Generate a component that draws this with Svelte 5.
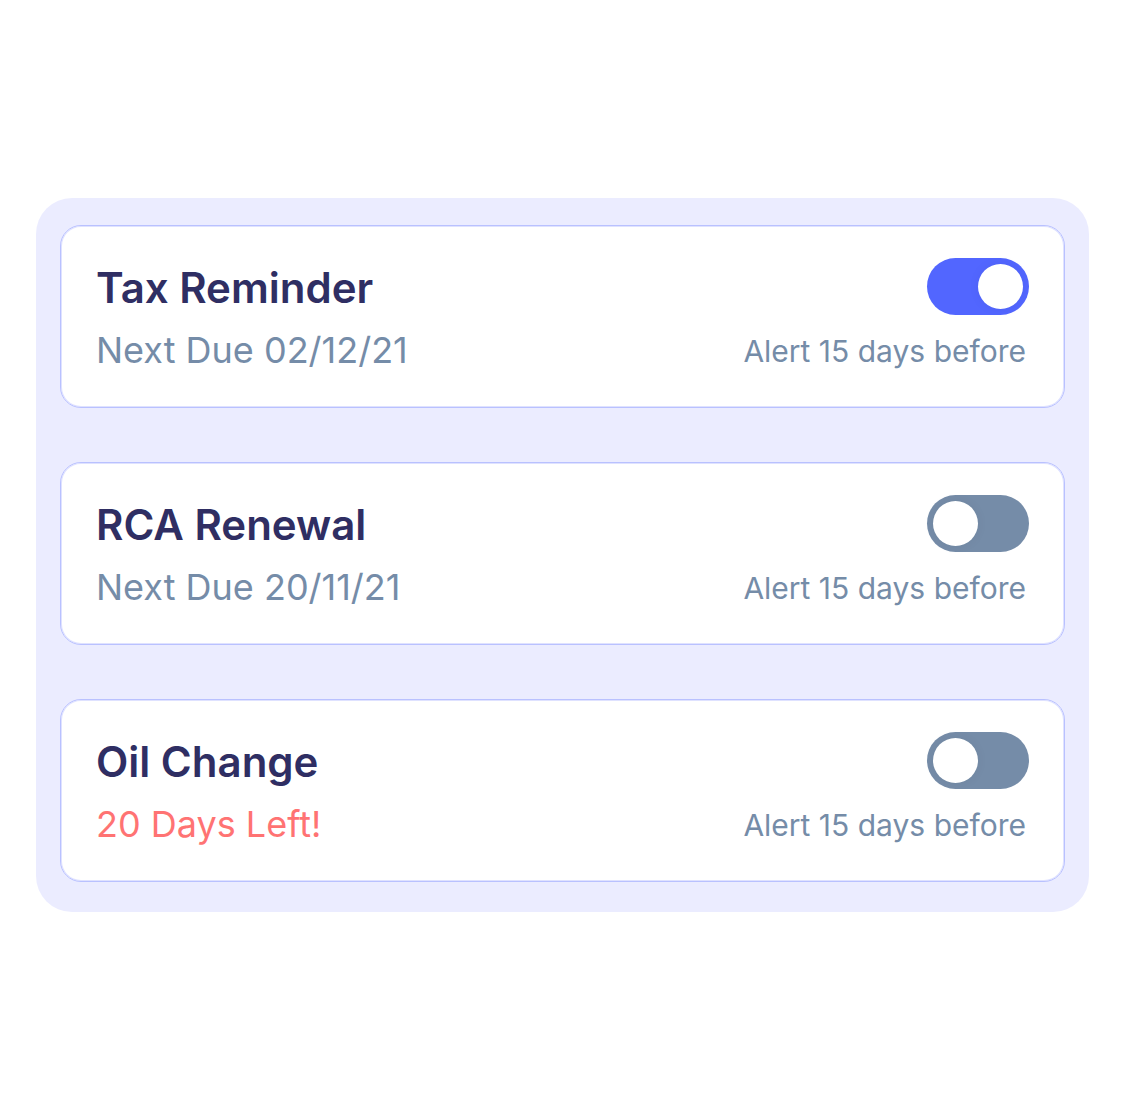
<script>
  let reminders = $state([
    { id: 'tax', title: 'Tax Reminder', due: 'Next Due 02/12/21', urgent: false, on: true },
    { id: 'rca', title: 'RCA Renewal', due: 'Next Due 20/11/21', urgent: false, on: false },
    { id: 'oil', title: 'Oil Change', due: '20 Days Left!', urgent: true, on: false },
  ]);
</script>

<main>
  <ul class="panel">
    {#each reminders as r (r.id)}
      <li class="card">
        <div class="row">
          <label class="title" for={r.id}>{r.title}</label>
          <input class="switch" type="checkbox" role="switch" id={r.id} bind:checked={r.on} />
        </div>
        <div class="row">
          <span class="due" class:urgent={r.urgent}>{r.due}</span>
          <span class="alert">Alert 15 days before</span>
        </div>
      </li>
    {/each}
  </ul>
</main>

<style>
  :global(body) {
    margin: 0;
    background: #fff;
  }
  main {
    box-sizing: border-box;
    min-height: 100vh;
    padding: 36px;
    display: flex;
    align-items: center;
    font-family: Inter, sans-serif;
  }
  .panel {
    box-sizing: border-box;
    flex: 1;
    margin: 0;
    padding: 27px 24px 30px;
    list-style: none;
    display: flex;
    flex-direction: column;
    gap: 54px;
    background: #ebecff;
    border-radius: 36px;
  }
  .card {
    padding: 32px 35px;
    display: flex;
    flex-direction: column;
    gap: 10px;
    background: #fff;
    border: 1px solid #b9c1ff;
    border-radius: 21px;
    box-shadow: inset 0 0 0 1px #dfe2ff;
  }
  .row {
    display: flex;
    align-items: flex-start;
    justify-content: space-between;
    gap: 24px;
  }
  .title {
    font-size: 42px;
    line-height: 59px;
    font-weight: 600;
    color: #2f2e63;
  }
  .due {
    font-size: 36px;
    line-height: 46px;
    color: #758ca8;
  }
  .due.urgent {
    color: #ff7373;
  }
  .alert {
    padding-right: 3px;
    font-size: 30px;
    line-height: 48px;
    color: #758ca8;
  }
  .switch {
    appearance: none;
    box-sizing: border-box;
    flex: none;
    width: 102px;
    height: 57px;
    margin: 0;
    padding: 6px;
    display: flex;
    border-radius: 29px;
    background: #758ca8;
    cursor: pointer;
  }
  .switch::before {
    content: '';
    width: 45px;
    height: 45px;
    border-radius: 50%;
    background: #fff;
    box-shadow: 0 0 12px rgba(0, 0, 0, 0.05);
  }
  .switch:checked {
    justify-content: flex-end;
    background: #5266ff;
  }
</style>
